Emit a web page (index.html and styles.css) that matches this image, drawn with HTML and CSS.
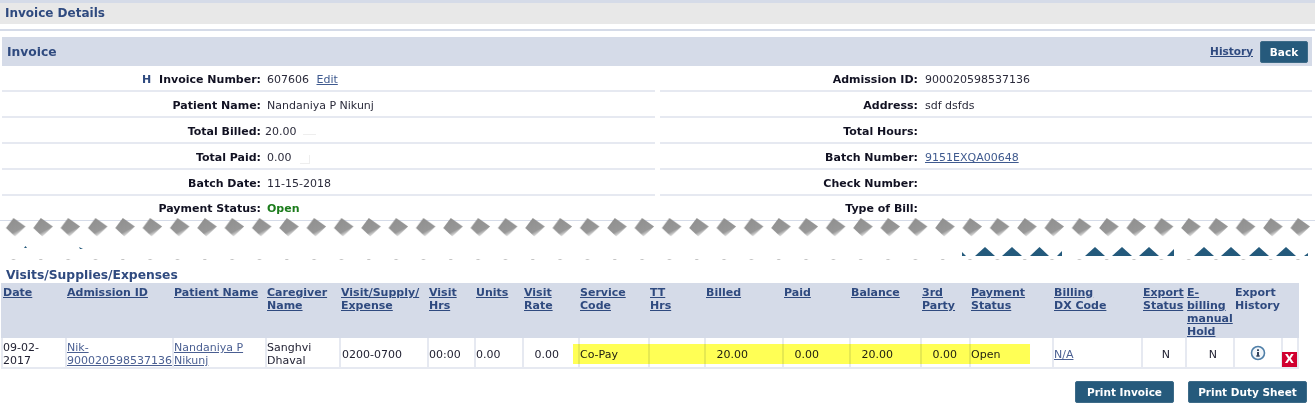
FILE: index.html
```html
<!DOCTYPE html>
<html lang="en">
<head>
<meta charset="utf-8">
<title>Invoice Details</title>
<link rel="stylesheet" href="styles.css">
</head>
<body>
<div class="top-line"></div>
<div class="page-title">Invoice Details</div>
<div class="title-rule"></div>
<section class="invoice">
  <header class="bar">
    <h2>Invoice</h2>
    <div class="bar-actions"><a href="#" class="strong-link">History</a><button class="btn btn-back">Back</button></div>
  </header>
  <div class="info">
    <div class="row"><div class="label"><span class="flag">H</span>Invoice Number:</div><div class="value">607606 <a href="#" class="edit">Edit</a></div></div>
    <div class="row"><div class="label">Admission ID:</div><div class="value">900020598537136</div></div>
    <div class="row"><div class="label">Patient Name:</div><div class="value">Nandaniya P Nikunj</div></div>
    <div class="row"><div class="label">Address:</div><div class="value">sdf dsfds</div></div>
    <div class="row"><div class="label">Total Billed:</div><div class="value tight">20.00<span class="ghost"></span></div></div>
    <div class="row"><div class="label">Total Hours:</div><div class="value"></div></div>
    <div class="row"><div class="label">Total Paid:</div><div class="value">0.00<span class="ghost ghost-small"></span></div></div>
    <div class="row"><div class="label">Batch Number:</div><div class="value"><a href="#">9151EXQA00648</a></div></div>
    <div class="row"><div class="label">Batch Date:</div><div class="value">11-15-2018</div></div>
    <div class="row"><div class="label">Check Number:</div><div class="value"></div></div>
    <div class="row last"><div class="label">Payment Status:</div><div class="value open">Open</div></div>
    <div class="row last"><div class="label">Type of Bill:</div><div class="value"></div></div>
  </div>
</section>
<svg class="tear" width="1315" height="44" viewBox="0 0 1315 44" aria-hidden="true">
  <defs>
    <linearGradient id="fade" x1="0.25" y1="0.1" x2="0.72" y2="0.95">
      <stop offset="0" stop-color="#909090"/>
      <stop offset="0.68" stop-color="#979797"/>
      <stop offset="1" stop-color="#ffffff"/>
    </linearGradient>
    <pattern id="diamonds" patternUnits="userSpaceOnUse" width="27.33" height="44" x="0">
      <polygon points="13.5,0 25.500,8.500 15,18.500 6,10" fill="url(#fade)"/>
      <rect x="12" y="41" width="3" height="1" fill="#c4c4c4"/>
    </pattern>
  </defs>
  <rect x="0" y="2" width="1315" height="1" fill="#d5dbe8"/>
  <rect x="0" y="0" width="1315" height="44" fill="url(#diamonds)"/>
  <g fill="#245a7c">
    <polygon points="962,38 966,38 962,34"/>
    <polygon points="975,38 995,38 985,29"/>
    <polygon points="1002,38 1022,38 1012,29"/>
    <polygon points="1030,38 1049,38 1039.500,29"/>
    <polygon points="1057,38 1062,38 1062,33"/>
    <polygon points="1085,38 1105,38 1095,29"/>
    <polygon points="1112,38 1132,38 1122,29"/>
    <polygon points="1139,38 1159,38 1149,29"/>
    <polygon points="1167,38 1174,38 1174,31"/>
    <polygon points="1194,38 1214,38 1204,29"/>
    <polygon points="1221,38 1241,38 1231,29"/>
    <polygon points="1249,38 1269,38 1259,29"/>
    <polygon points="1276,38 1296,38 1286,29"/>
    <polygon points="1304,38 1308,38 1308,35"/>
    <polygon points="24,30 27,30 25.500,28"/>
    <polygon points="79,29 83,31 80,31"/>
  </g>
</svg>
<h3 class="table-title">Visits/Supplies/Expenses</h3>
<div class="table-wrap">
  <table class="visits">
    <thead>
      <tr>
        <th><a href="#">Date</a></th>
        <th><a href="#">Admission ID</a></th>
        <th><a href="#">Patient Name</a></th>
        <th><a href="#">Caregiver<br>Name</a></th>
        <th><a href="#">Visit/Supply/<br>Expense</a></th>
        <th><a href="#">Visit<br>Hrs</a></th>
        <th><a href="#">Units</a></th>
        <th><a href="#">Visit<br>Rate</a></th>
        <th><a href="#">Service<br>Code</a></th>
        <th><a href="#">TT<br>Hrs</a></th>
        <th><a href="#">Billed</a></th>
        <th><a href="#">Paid</a></th>
        <th><a href="#">Balance</a></th>
        <th><a href="#">3rd<br>Party</a></th>
        <th><a href="#">Payment<br>Status</a></th>
        <th><a href="#">Billing<br>DX Code</a></th>
        <th><a href="#">Export<br>Status</a></th>
        <th><a href="#">E-<br>billing<br>manual<br>Hold</a></th>
        <th>Export<br>History</th>
        <th></th>
      </tr>
    </thead>
    <tbody>
      <tr>
        <td>09-02-<br>2017</td>
        <td><a href="#">Nik-<br>900020598537136</a></td>
        <td><a href="#">Nandaniya P<br>Nikunj</a></td>
        <td>Sanghvi<br>Dhaval</td>
        <td>0200-0700</td>
        <td>00:00</td>
        <td>0.00</td>
        <td class="num">0.00</td>
        <td>Co-Pay</td>
        <td></td>
        <td class="num">20.00</td>
        <td class="num">0.00</td>
        <td class="num">20.00</td>
        <td class="num">0.00</td>
        <td>Open</td>
        <td><a href="#">N/A</a></td>
        <td class="num">N</td>
        <td class="num">N</td>
        <td class="icon-cell">
          <svg width="16" height="16" viewBox="0 0 16 16" aria-label="Info"><circle cx="8" cy="8" r="6.500" fill="#f2f6fa" stroke="#4f7fa8" stroke-width="1.600"/><rect x="7" y="7" width="2" height="4.500" fill="#33435c"/><rect x="7" y="4.300" width="2" height="1.700" fill="#33435c"/><rect x="6" y="10.500" width="4" height="1" fill="#33435c"/></svg>
        </td>
        <td class="delete-cell"><span class="delete">X</span></td>
      </tr>
    </tbody>
  </table>
  <div class="highlight"></div>
</div>
<div class="footer-actions">
  <button class="btn btn-print">Print Invoice</button>
  <button class="btn btn-duty">Print Duty Sheet</button>
</div>
</body>
</html>
```
FILE: styles.css
```css
* { box-sizing: border-box; }
html, body { margin: 0; padding: 0; background: #fff; }
body {
  width: 1315px;
  height: 404px;
  overflow: hidden;
  font-family: "DejaVu Sans", Verdana, sans-serif;
  font-size: 11px;
  color: #222233;
}
a { color: #3f5a8f; text-decoration: underline; }

.top-line { height: 3px; background: #d5dbe8; }
.page-title {
  height: 21px;
  line-height: 20px;
  padding-left: 5px;
  background: #e8e8e8;
  font-size: 12px;
  font-weight: bold;
  color: #2f4a7f;
}
.title-rule { height: 2px; margin-top: 5px; background: #d5dbe8; }

.invoice { margin: 6px 3px 0 2px; }
.bar {
  height: 29px;
  background: #d5dbe8;
  display: flex;
  align-items: center;
  justify-content: space-between;
  padding: 0 4px 0 5px;
}
.bar h2 { margin: 0; font-size: 12.3px; font-weight: bold; color: #2f4a7f; }
.bar-actions { display: flex; align-items: center; gap: 7px; }
.strong-link { font-size: 10.5px; font-weight: bold; color: #2f4a7f; margin-bottom: 2px; }

.btn {
  border: 1px solid #3d6b88;
  border-radius: 2px;
  background: #265a7c;
  color: #fff;
  font-family: inherit;
  font-size: 10.5px;
  font-weight: bold;
  height: 22px;
  padding: 0;
}
.btn-back { width: 48px; }
.btn-print { width: 99px; }
.btn-duty { width: 119px; }

.info {
  display: grid;
  grid-template-columns: 653px 652px;
  column-gap: 5px;
}
.row {
  height: 26px;
  padding-top: 3px;
  display: grid;
  grid-template-columns: 259px 1fr;
  column-gap: 6px;
  align-items: center;
  border-bottom: 2px solid #e6e9f1;
}
.row:nth-child(even) { grid-template-columns: 258px 1fr; column-gap: 7px; }
.row.last {
  border-bottom: 0;
  height: 22px;
  padding-top: 6px;
  align-items: start;
}
.label { font-weight: bold; color: #111122; text-align: right; }
.flag { color: #2f4a7f; margin-right: 8px; }
.value { color: #2b2b3b; }
.value.tight { margin-left: -2px; }
.edit { margin-left: 4px; }
.open { color: #1c7c1c; font-weight: bold; }
.ghost {
  display: inline-block;
  width: 13px;
  height: 4px;
  margin-left: 6px;
  border-bottom: 1px solid #eeeeee;
}
.ghost-small {
  width: 10px;
  height: 9px;
  margin-left: 8px;
  vertical-align: -3px;
  border-right: 1px solid #eeeeee;
}

.tear { display: block; }
.table-title {
  margin: 0;
  padding: 6px 0 0 6px;
  height: 21px;
  line-height: 14px;
  font-size: 12.3px;
  font-weight: bold;
  color: #2f4a7f;
}

.table-wrap { position: relative; margin-left: 1px; width: 1298px; }
.visits {
  table-layout: fixed;
  width: 1298px;
  border-collapse: separate;
  border-spacing: 0;
}
.visits th {
  height: 55px;
  padding: 3px 0 0 2px;
  vertical-align: top;
  text-align: left;
  background: #d5dbe8;
  font-weight: bold;
  line-height: 13px;
  color: #2f4a7f;
}
.visits th a { color: #2f4a7f; }
.visits td {
  height: 31px;
  padding: 3px 0 0;
  line-height: 13px;
  border-left: 2px solid #e6e9f1;
  border-bottom: 2px solid #e6e9f1;
  vertical-align: middle;
  white-space: nowrap;
}
.visits td:last-child { border-right: 2px solid #e6e9f1; }
.visits td a { color: #4a5f92; }

.visits th:nth-child(1) { width: 64px; }
.visits th:nth-child(2) { width: 107px; }
.visits th:nth-child(3) { width: 93px; }
.visits th:nth-child(4) { width: 74px; }
.visits th:nth-child(5) { width: 88px; }
.visits th:nth-child(6) { width: 47px; }
.visits th:nth-child(7) { width: 48px; }
.visits th:nth-child(8) { width: 56px; }
.visits th:nth-child(9) { width: 70px; }
.visits th:nth-child(10) { width: 56px; }
.visits th:nth-child(11) { width: 78px; }
.visits th:nth-child(12) { width: 67px; }
.visits th:nth-child(13) { width: 71px; }
.visits th:nth-child(14) { width: 49px; }
.visits th:nth-child(15) { width: 83px; }
.visits th:nth-child(16) { width: 89px; }
.visits th:nth-child(17) { width: 44px; }
.visits th:nth-child(18) { width: 48px; }
.visits th:nth-child(19) { width: 48px; }
.visits th:nth-child(20) { width: 18px; }

.num { text-align: right; }
.visits td:nth-child(5) { padding-left: 1px; }
.visits td:nth-child(8) { padding-right: 19px; }
.visits td:nth-child(11) { padding-right: 34px; }
.visits td:nth-child(12) { padding-right: 30px; }
.visits td:nth-child(13) { padding-right: 27px; }
.visits td:nth-child(14) { padding-right: 12px; }
.visits td:nth-child(17) { padding-right: 15px; }
.visits td:nth-child(18) { padding-right: 16px; }

.visits .icon-cell { text-align: center; }
.icon-cell svg { display: block; margin: 0 auto 3px; }
.visits .delete-cell { vertical-align: bottom; padding-top: 0; }
.delete {
  display: block;
  width: 15px;
  height: 15px;
  margin-left: -1px;
  background: #d10030;
  color: #fff;
  font-size: 12px;
  font-weight: bold;
  line-height: 15px;
  text-align: center;
}

.highlight {
  position: absolute;
  left: 572px;
  top: 61px;
  width: 457px;
  height: 20px;
  background: #ffff55;
  mix-blend-mode: multiply;
  pointer-events: none;
}

.footer-actions {
  display: flex;
  justify-content: flex-end;
  gap: 14px;
  padding-right: 8px;
  margin-top: 12px;
}
```
